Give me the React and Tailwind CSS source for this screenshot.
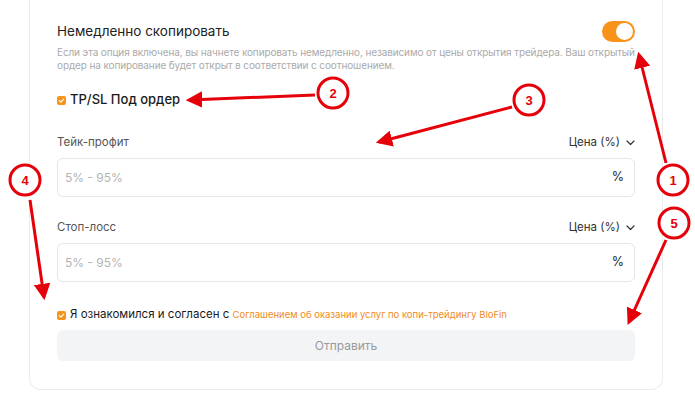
import React from "react";

const font = { fontFamily: "Inter, 'Noto Sans', sans-serif" };

function Check() {
  return (
    <span className="flex h-[9px] w-[9px] items-center justify-center rounded-[2px] bg-[#f7931a]">
      <svg width="7" height="7" viewBox="0 0 8 8">
        <path d="M1.5 4.2 L3.3 5.8 L6.5 2.3" fill="none" stroke="#fff" strokeWidth="1.3" strokeLinecap="round" strokeLinejoin="round" />
      </svg>
    </span>
  );
}

function Chevron() {
  return (
    <svg width="9" height="6" viewBox="0 0 9 6" className="ml-[6px]">
      <path d="M1 1 L4.5 4.5 L8 1" fill="none" stroke="#333" strokeWidth="1.2" strokeLinecap="round" strokeLinejoin="round" />
    </svg>
  );
}

function Field({ label }) {
  return (
    <div className="flex flex-col">
      <div className="flex h-4 items-center justify-between">
        <span className="text-[11.5px] text-[#555]">{label}</span>
        <span className="flex items-center text-[11.5px] text-[#333]">
          Цена (%)
          <Chevron />
        </span>
      </div>
      <div className="mt-[7px] flex h-[39px] items-center justify-between rounded-md border border-[#e6e6e6] pl-[7px] pr-2">
        <span className="text-[12px] text-[#b3b3b3]">5% - 95%</span>
        <span className="mr-[2px] text-[12.5px] text-[#222]">%</span>
      </div>
    </div>
  );
}

function Annotations() {
  const red = "#e6000a";
  const circles = [
    [673, 180, "1"],
    [333, 93, "2"],
    [529, 100, "3"],
    [25, 180, "4"],
    [674, 223, "5"],
  ];
  const arrows = [
    [666, 163, 639, 55],
    [315, 95, 189, 100],
    [512, 107, 379, 142],
    [30, 200, 44, 297],
    [666, 240, 629, 322],
  ];
  return (
    <svg className="pointer-events-none absolute left-0 top-0" width="695" height="403">
      <defs>
        <marker id="ah" viewBox="0 0 10 10" refX="8" refY="5" markerWidth="5.5" markerHeight="5.5" orient="auto">
          <path d="M0 0 L10 5 L0 10 Z" fill={red} />
        </marker>
      </defs>
      {arrows.map(([x1, y1, x2, y2], i) => (
        <line key={i} x1={x1} y1={y1} x2={x2} y2={y2} stroke={red} strokeWidth="3" markerEnd="url(#ah)" />
      ))}
      {circles.map(([cx, cy, t]) => (
        <g key={t}>
          <circle cx={cx} cy={cy} r="15" fill="#fff" stroke={red} strokeWidth="3" />
          <text x={cx} y={cy + 4.5} textAnchor="middle" fontSize="13" fontWeight="700" fill={red} fontFamily="'Liberation Sans', Arial, sans-serif">
            {t}
          </text>
        </g>
      ))}
    </svg>
  );
}

export default function App() {
  return (
    <div className="relative h-[403px] w-[695px] overflow-hidden bg-white" style={font}>
      <div className="ml-[29px] flex w-[634px] flex-col rounded-b-xl border border-t-0 border-[#ebebeb] px-[27px] pb-[28px] pt-[20px]">
        <div className="flex h-[22px] items-center justify-between">
          <span className="text-[13.5px] text-[#222]">Немедленно скопировать</span>
          <div className="flex h-[21px] w-[33px] items-center justify-end rounded-full bg-[#f7931a] px-[2px]">
            <div className="h-[17px] w-[17px] rounded-full bg-white" />
          </div>
        </div>
        <p className="mt-[4px] text-[10px] leading-[13px] tracking-[-0.12px] text-[#aaa]">
          Если эта опция включена, вы начнете копировать немедленно, независимо от цены открытия трейдера. Ваш открытый ордер на копирование будет открыт в соответствии с соотношением.
        </p>
        <div className="mt-[20px] flex h-4 items-center gap-[4px]">
          <Check />
          <span className="text-[13px] font-medium text-[#1a1a1a]">TP/SL Под ордер</span>
        </div>
        <div className="mt-[27px]">
          <Field label="Тейк-профит" />
        </div>
        <div className="mt-[23px]">
          <Field label="Стоп-лосс" />
        </div>
        <div className="mt-[25px] flex h-4 items-center gap-[4px]">
          <Check />
          <span className="text-[11.5px] text-[#1a1a1a]">
            Я ознакомился и согласен с <span className="text-[9.5px] text-[#f08c1c]">Соглашением об оказании услуг по копи-трейдингу BloFin</span>
          </span>
        </div>
        <button className="mt-[7px] h-[31px] w-full rounded-md bg-[#f3f4f6] text-[12px] text-[#9a9a9a]">Отправить</button>
      </div>
      <Annotations />
    </div>
  );
}
